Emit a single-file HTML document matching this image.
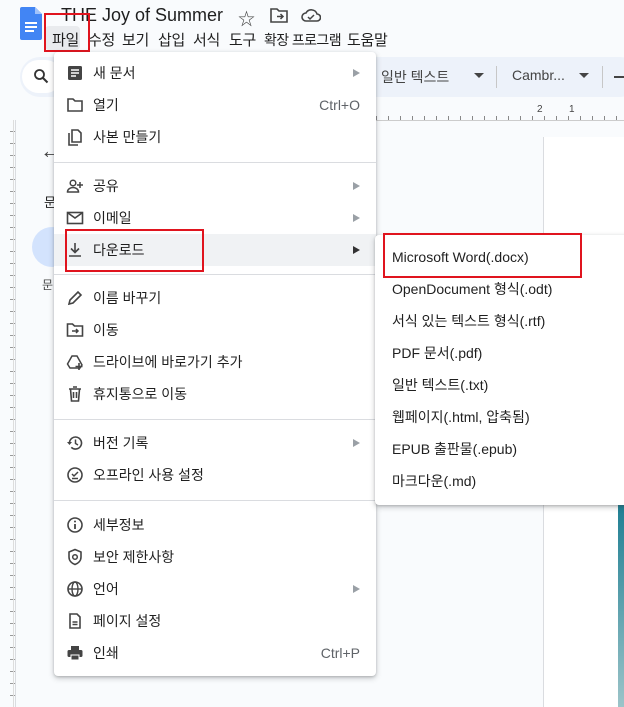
<!DOCTYPE html><html><head><meta charset="utf-8"><style>
*{margin:0;padding:0;box-sizing:border-box}
body{width:624px;height:707px;overflow:hidden;background:#f9fbfd;font-family:"Liberation Sans","Noto Sans CJK KR",sans-serif;color:#1f1f1f;position:relative}
.abs{position:absolute}
.mb{position:absolute;top:29px;font-size:15px;white-space:nowrap;letter-spacing:-0.3px}
.menu{position:absolute;background:#fff;border-radius:4px;box-shadow:0 2px 6px rgba(60,64,67,.3),0 1px 2px rgba(60,64,67,.2)}
.it{position:absolute;left:0;right:0;height:32px;font-size:14px;line-height:32px;padding-left:39px;color:#1f1f1f}
.it svg{position:absolute;left:12px;top:7px;width:18px;height:18px}
.ar{position:absolute;right:16px;top:12px;width:0;height:0;border-left:7px solid #9aa0a6;border-top:4px solid transparent;border-bottom:4px solid transparent}
.sc{position:absolute;right:16px;color:#5f6368;font-size:14px}
.sep{position:absolute;left:0;right:0;height:1px;background:#dadce0}
.red{position:absolute;border:2px solid #e0141e}
.sub .it{padding-left:17px}
</style></head><body>
<svg class="abs" style="left:20px;top:7px" width="22" height="34" viewBox="0 0 22 34"><path d="M2 0h13l7 7v24a2 2 0 0 1-2 2H2a2 2 0 0 1-2-2V2a2 2 0 0 1 2-2z" fill="#4285f4"/><path d="M15 0v7h7z" fill="#a1c2fa"/><rect x="5" y="15" width="12" height="2" fill="#fff"/><rect x="5" y="19" width="12" height="2" fill="#fff"/><rect x="5" y="23" width="9" height="2" fill="#fff"/></svg>
<div class="abs" style="left:61px;top:5px;font-size:18px;color:#1f1f1f">THE Joy of Summer</div>
<div class="abs" style="left:238px;top:5px;font-size:17px;color:#444">☆</div>
<svg class="abs" style="left:270px;top:8px" width="18" height="15" viewBox="0 0 18 15"><path d="M1 1h6l2 2h8v11H1z" fill="none" stroke="#444" stroke-width="1.6"/><path d="M7 8.5h6M10.5 6l2.5 2.5-2.5 2.5" fill="none" stroke="#444" stroke-width="1.5"/></svg>
<svg class="abs" style="left:301px;top:8px" width="20" height="15" viewBox="0 0 20 15"><path d="M5 13a4 4 0 0 1 0-8 6 6 0 0 1 11 1 3.5 3.5 0 0 1 0 7z" fill="none" stroke="#444" stroke-width="1.6"/><path d="M7 9l2 2 4-4" fill="none" stroke="#444" stroke-width="1.5"/></svg>
<div class="abs" style="left:45px;top:26px;width:35px;height:24px;background:#e9ebee;border-radius:4px"></div>
<span class="mb" style="left:52px">파일</span><span class="mb" style="left:88px">수정</span><span class="mb" style="left:122px">보기</span><span class="mb" style="left:158px">삽입</span><span class="mb" style="left:193px">서식</span><span class="mb" style="left:229px">도구</span><span class="mb" style="left:264px;font-size:14px;letter-spacing:-0.6px;top:30px">확장 프로그램</span><span class="mb" style="left:347px">도움말</span>
<div class="red" style="left:44px;top:13px;width:46px;height:39px"></div>
<div class="abs" style="left:20px;top:57px;width:620px;height:40px;background:#edf2fa;border-radius:20px"></div>
<div class="abs" style="left:22px;top:60px;width:40px;height:33px;background:#fff;border-radius:17px"></div>
<svg class="abs" style="left:33px;top:68px" width="16" height="16" viewBox="0 0 16 16"><circle cx="6.5" cy="6.5" r="4.5" fill="none" stroke="#333" stroke-width="1.8"/><path d="M10 10l4.5 4.5" stroke="#333" stroke-width="2"/></svg>
<div class="abs" style="left:381px;top:67px;font-size:14px;color:#444">일반 텍스트</div>
<div class="abs" style="left:474px;top:73px;border-top:5px solid #444;border-left:5px solid transparent;border-right:5px solid transparent"></div>
<div class="abs" style="left:496px;top:66px;width:1px;height:22px;background:#c7c7c7"></div>
<div class="abs" style="left:512px;top:67px;font-size:14px;color:#444">Cambr...</div>
<div class="abs" style="left:579px;top:73px;border-top:5px solid #444;border-left:5px solid transparent;border-right:5px solid transparent"></div>
<div class="abs" style="left:602px;top:66px;width:1px;height:22px;background:#c7c7c7"></div>
<div class="abs" style="left:614px;top:76px;width:10px;height:2px;background:#444"></div>
<div class="abs" style="left:376px;top:104px;width:248px;height:16px;font-size:10px;color:#444"><span class="abs" style="left:161px;top:0">2</span><span class="abs" style="left:193px;top:0">1</span></div>
<div class="abs" style="left:376px;top:116px;width:248px;height:5px;background:repeating-linear-gradient(90deg,#888 0 1px,transparent 1px 12px)"></div>
<div class="abs" style="left:376px;top:120px;width:248px;height:1px;background:#ccc"></div>
<div class="abs" style="left:0;top:120px;width:16px;height:587px;border-right:1px solid #dadce0;background:repeating-linear-gradient(180deg,transparent 0 11px,#999 11px 12px) right/5px 100% no-repeat"></div>
<div class="abs" style="left:13px;top:120px;width:1px;height:587px;background:#ddd"></div>
<div class="abs" style="left:40px;top:138px;font-size:22px;color:#444">←</div>
<div class="abs" style="left:44px;top:192px;font-size:13px">문</div>
<div class="abs" style="left:32px;top:227px;width:40px;height:40px;border-radius:20px;background:#d3e3fd"></div>
<div class="abs" style="left:42px;top:276px;font-size:12px;color:#444">문</div>
<div class="abs" style="left:543px;top:137px;width:81px;height:570px;background:#fff;border-left:1px solid #dadce0"></div>
<div class="abs" style="left:618px;top:505px;width:6px;height:202px;background:linear-gradient(#1f7f93,#9cc4c9)"></div>
<div class="menu" style="left:54px;top:52px;width:322px;height:624px">
<div class="it" style="top:5px"><svg viewBox="0 0 18 18"><rect x="2" y="2" width="14" height="14" rx="1.5" fill="#444"/><path d="M5 6h8M5 9h8M5 12h5" stroke="#fff" stroke-width="1.5"/></svg>새 문서<span class="ar"></span></div>
<div class="it" style="top:37px"><svg viewBox="0 0 18 18"><path d="M2 3h5l2 2h7v10H2z" fill="none" stroke="#444" stroke-width="1.6"/></svg>열기<span class="sc">Ctrl+O</span></div>
<div class="it" style="top:69px"><svg viewBox="0 0 18 18"><path d="M6 2h6l3 3v9H6z" fill="none" stroke="#444" stroke-width="1.6"/><path d="M3 5v12h9" fill="none" stroke="#444" stroke-width="1.6"/></svg>사본 만들기</div>
<div class="sep" style="top:110px"></div>
<div class="it" style="top:118px"><svg viewBox="0 0 18 18"><circle cx="7" cy="6" r="2.8" fill="none" stroke="#444" stroke-width="1.5"/><path d="M1.5 15c0-3 3-4.5 5.5-4.5s5.5 1.5 5.5 4.5z" fill="none" stroke="#444" stroke-width="1.5"/><path d="M14 5v6M11 8h6" stroke="#444" stroke-width="1.5"/></svg>공유<span class="ar"></span></div>
<div class="it" style="top:150px"><svg viewBox="0 0 18 18"><rect x="1.5" y="3.5" width="15" height="11" fill="none" stroke="#444" stroke-width="1.6"/><path d="M2 4l7 5 7-5" fill="none" stroke="#444" stroke-width="1.6"/></svg>이메일<span class="ar"></span></div>
<div class="it" style="top:182px;background:#f0f2f4"><svg viewBox="0 0 18 18"><path d="M9 2v9M5 7.5l4 4 4-4M3 15h12" fill="none" stroke="#444" stroke-width="1.6"/></svg>다운로드<span class="ar" style="border-left-color:#333"></span></div>
<div class="sep" style="top:222px"></div>
<div class="it" style="top:230px"><svg viewBox="0 0 18 18"><path d="M3 15l1-4 8-8 3 3-8 8z" fill="none" stroke="#444" stroke-width="1.6"/></svg>이름 바꾸기</div>
<div class="it" style="top:262px"><svg viewBox="0 0 18 18"><path d="M1.5 3h5l2 2h8v10h-15z" fill="none" stroke="#444" stroke-width="1.6"/><path d="M6 10h6M10 8l2 2-2 2" fill="none" stroke="#444" stroke-width="1.5"/></svg>이동</div>
<div class="it" style="top:294px"><svg viewBox="0 0 18 18"><path d="M6 3h5l5 9-2 3H4L1.5 11z" fill="none" stroke="#444" stroke-width="1.5"/><path d="M13 10v7M9.5 13.5h7" stroke="#444" stroke-width="1.6"/></svg>드라이브에 바로가기 추가</div>
<div class="it" style="top:326px"><svg viewBox="0 0 18 18"><path d="M3 4h12M7 2h4M4.5 4l1 12h7l1-12M7.5 7v6M10.5 7v6" fill="none" stroke="#444" stroke-width="1.6"/></svg>휴지통으로 이동</div>
<div class="sep" style="top:367px"></div>
<div class="it" style="top:375px"><svg viewBox="0 0 18 18"><path d="M3.5 9a6 6 0 1 1 1.8 4.3" fill="none" stroke="#444" stroke-width="1.6"/><path d="M1 8l2.5 3 2.5-3" fill="#444"/><path d="M9.5 5.5v4l2.5 1.5" fill="none" stroke="#444" stroke-width="1.5"/></svg>버전 기록<span class="ar"></span></div>
<div class="it" style="top:407px"><svg viewBox="0 0 18 18"><circle cx="9" cy="9" r="7" fill="none" stroke="#444" stroke-width="1.6"/><path d="M6 8l2 2 4-4M6 12.5h6" fill="none" stroke="#444" stroke-width="1.5"/></svg>오프라인 사용 설정</div>
<div class="sep" style="top:448px"></div>
<div class="it" style="top:457px"><svg viewBox="0 0 18 18"><circle cx="9" cy="9" r="7" fill="none" stroke="#444" stroke-width="1.6"/><path d="M9 8v5" stroke="#444" stroke-width="1.8"/><circle cx="9" cy="5.5" r="1" fill="#444"/></svg>세부정보</div>
<div class="it" style="top:489px"><svg viewBox="0 0 18 18"><path d="M9 1.5l6 2.5v5c0 4-3 6.5-6 7.5-3-1-6-3.5-6-7.5V4z" fill="none" stroke="#444" stroke-width="1.6"/><circle cx="9" cy="9" r="2.3" fill="none" stroke="#444" stroke-width="1.5"/></svg>보안 제한사항</div>
<div class="it" style="top:521px"><svg viewBox="0 0 18 18"><circle cx="9" cy="9" r="7" fill="none" stroke="#444" stroke-width="1.6"/><ellipse cx="9" cy="9" rx="3" ry="7" fill="none" stroke="#444" stroke-width="1.4"/><path d="M2 9h14" stroke="#444" stroke-width="1.4"/></svg>언어<span class="ar"></span></div>
<div class="it" style="top:553px"><svg viewBox="0 0 18 18"><path d="M4 2h7l3 3v11H4z" fill="none" stroke="#444" stroke-width="1.6"/><path d="M6.5 10h5M6.5 12.5h5" stroke="#444" stroke-width="1.4"/></svg>페이지 설정</div>
<div class="it" style="top:585px"><svg viewBox="0 0 18 18"><rect x="5" y="2" width="8" height="4" fill="#444"/><rect x="1.5" y="6" width="15" height="7" rx="1.5" fill="#444"/><rect x="5" y="11" width="8" height="5" fill="#444" stroke="#fff" stroke-width="1"/></svg>인쇄<span class="sc">Ctrl+P</span></div>
</div>
<div class="red" style="left:65px;top:229px;width:139px;height:43px"></div>
<div class="menu sub" style="left:375px;top:235px;width:260px;height:270px">
<div class="it" style="top:6px">Microsoft Word(.docx)</div>
<div class="it" style="top:38px">OpenDocument 형식(.odt)</div>
<div class="it" style="top:70px">서식 있는 텍스트 형식(.rtf)</div>
<div class="it" style="top:102px">PDF 문서(.pdf)</div>
<div class="it" style="top:134px">일반 텍스트(.txt)</div>
<div class="it" style="top:166px">웹페이지(.html, 압축됨)</div>
<div class="it" style="top:198px">EPUB 출판물(.epub)</div>
<div class="it" style="top:230px">마크다운(.md)</div>
</div>
<div class="red" style="left:383px;top:233px;width:199px;height:45px"></div>
</body></html>
